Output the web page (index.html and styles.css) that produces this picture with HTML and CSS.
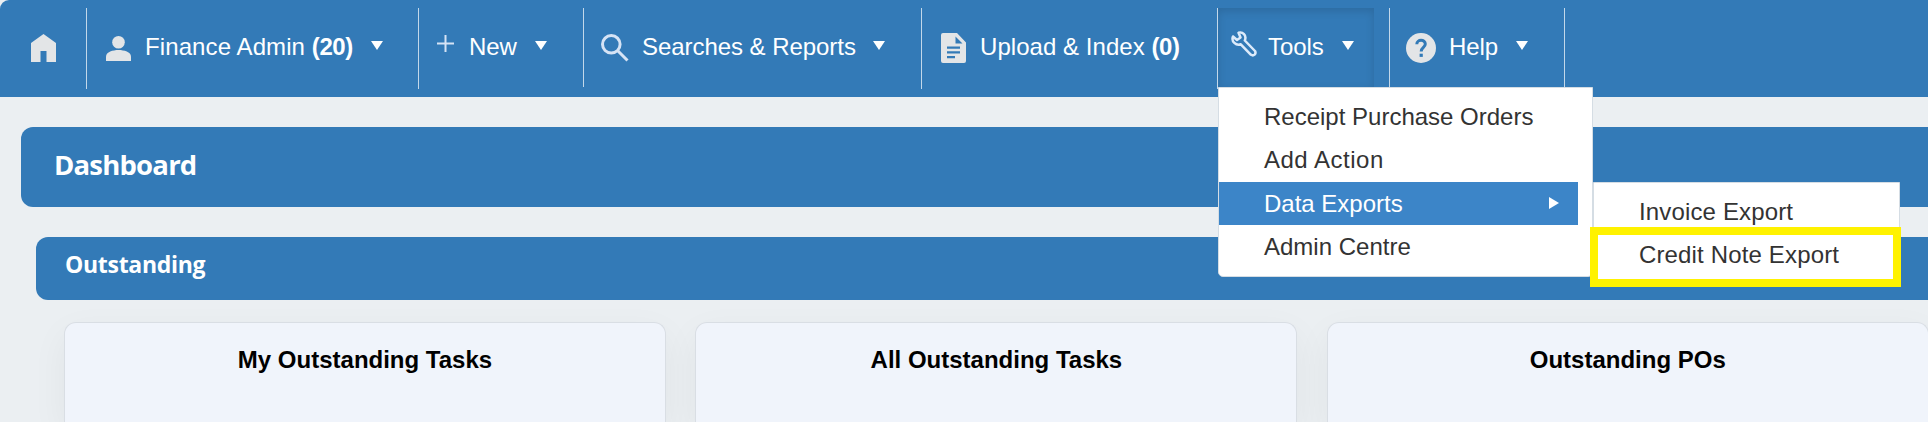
FILE: index.html
```html
<!DOCTYPE html>
<html lang="en">
<head>
    <meta charset="UTF-8">
    <meta name="viewport" content="width=device-width, initial-scale=1.0">
    <title>Dashboard</title>
    <link rel="stylesheet" href="styles.css">
</head>
<body>
    <nav class="navbar">
        <a class="nav-item home">
            <svg class="icon" width="25" height="28" viewBox="0 0 25 28"><path d="M12.5 0 L25 9 V28 H15.5 V17 H9.5 V28 H0 V9 Z"/></svg>
        </a>
        <a class="nav-item user">
            <svg class="icon" width="25" height="25" viewBox="0 0 25 25"><circle cx="12.5" cy="6.3" r="6.3"/><path d="M0 25 V20.5 C0 16 7 14 12.5 14 S25 16 25 20.5 V25 Z"/></svg>
            <span class="label">Finance Admin <b>(20)</b></span>
            <span class="caret"></span>
        </a>
        <a class="nav-item new">
            <svg class="icon line" width="17" height="17" viewBox="0 0 17 17"><path d="M8.5 0 V17 M0 8.5 H17"/></svg>
            <span class="label">New</span>
            <span class="caret"></span>
        </a>
        <a class="nav-item search">
            <svg class="icon line" width="28" height="28" viewBox="0 0 28 28"><circle cx="10.3" cy="10.3" r="8.8"/><path d="M16.5 16.5 L26.5 26.5"/></svg>
            <span class="label">Searches &amp; Reports</span>
            <span class="caret"></span>
        </a>
        <a class="nav-item upload">
            <svg class="icon" width="25" height="30" viewBox="0 0 25 30"><path fill-rule="evenodd" d="M2 0 H16 L25 9.5 V28 Q25 30 23 30 H2 Q0 30 0 28 V2 Q0 0 2 0 Z M14.5 3.5 V10.5 H21.5 Z M6 13.5 V15.7 H19 V13.5 Z M6 18.3 V20.5 H19 V18.3 Z M6 23 V25.2 H14 V23 Z"/></svg>
            <span class="label">Upload &amp; Index <b>(0)</b></span>
        </a>
        <div class="nav-item tools">
            <div class="tools-button">
                <svg class="icon wrench" width="26" height="26" viewBox="0 0 26 26"><path d="M2 5.5 L6 9 L9.5 6.5 L7.5 1.8 C11.5 0.5 16 4 13.8 9.5 L24 20 Q25.2 22 23.6 23.6 Q22 25 20 23.8 L9.8 13.3 C5 15 0 10.5 2 5.5 Z"/></svg>
                <span class="label">Tools</span>
                <span class="caret"></span>
            </div>
            <ul class="menu">
                <li>Receipt Purchase Orders</li>
                <li class="spaced">Add Action</li>
                <li class="active">Data Exports<span class="arrow"></span>
                    <ul class="menu submenu">
                        <li>Invoice Export</li>
                        <li>Credit Note Export<span class="highlight"></span></li>
                    </ul>
                </li>
                <li>Admin Centre</li>
            </ul>
        </div>
        <a class="nav-item help">
            <svg class="icon" width="30" height="30" viewBox="0 0 30 30"><circle cx="15" cy="15" r="15"/><path class="mark" d="M10.8 11.3 C10.8 6 19.3 6.2 19.3 11 C19.3 14.5 15.2 14.3 15.2 18.5"/><rect class="dot" x="13.6" y="20.7" width="3.2" height="3.2"/></svg>
            <span class="label">Help</span>
            <span class="caret"></span>
        </a>
    </nav>

    <main>
        <h1>Dashboard</h1>
        <h2>Outstanding</h2>
        <div class="cards">
            <div class="card"><h3>My Outstanding Tasks</h3></div>
            <div class="card"><h3>All Outstanding Tasks</h3></div>
            <div class="card"><h3>Outstanding POs</h3></div>
        </div>
    </main>
</body>
</html>
```
FILE: styles.css
```css
* {
    margin: 0;
    padding: 0;
    box-sizing: border-box;
}

body {
    font-family: "Liberation Sans", Arial, sans-serif;
    font-size: 24px;
    background: #ebeff2;
    height: 422px;
    overflow: hidden;
}

/* Navigation */
.navbar {
    display: flex;
    align-items: flex-start;
    height: 97px;
    padding-top: 8px;
    background: #337ab7;
    border-top-left-radius: 9px;
    color: #fff;
}

.nav-item {
    display: flex;
    align-items: flex-start;
    flex: none;
    height: 81px;
    border-left: 1px solid #c3d8ea;
}

.label {
    line-height: 28px;
    margin-top: 25px;
    letter-spacing: -0.05px;
    white-space: nowrap;
}

.label b {
    letter-spacing: -0.4px;
}

.caret {
    margin-top: 33px;
    border: 6px solid transparent;
    border-top: 9px solid #fff;
    border-bottom: 0;
}

.icon {
    flex: none;
    fill: #e3e5e7;
    margin-top: 26px;
}

.line {
    fill: none;
    stroke: #d6e3f5;
    stroke-width: 3;
}

.home {
    width: 86px;
    padding-left: 31px;
    border-left: 0;
}

.user {
    width: 332px;
    padding-left: 19px;
}

.user .icon {
    margin: 28px 14px 0 0;
}

.user .label {
    letter-spacing: 0.1px;
}

.user .caret {
    margin-left: 18px;
}

.search .caret {
    margin-left: 17px;
}

.new {
    width: 165px;
    padding-left: 18px;
}

.new .icon {
    margin: 27px 15px 0 0;
    stroke-width: 2;
}

.new .caret,
.help .caret {
    margin-left: 18px;
}

.search {
    width: 338px;
    height: 79px;
    padding-left: 17px;
}

.search .icon {
    margin-right: 13px;
}

.upload {
    width: 296px;
    padding-left: 19px;
}

.upload .icon {
    margin: 25px 14px 0 0;
}

.upload .label {
    letter-spacing: 0.05px;
}

.tools {
    position: relative;
    width: 172px;
}

.tools-button {
    display: flex;
    align-items: flex-start;
    width: 156px;
    height: 79px;
    padding-left: 13px;
    box-shadow: inset 0 3px 8px rgba(0, 0, 0, 0.13);
}

.wrench {
    fill: none;
    stroke: #dceafa;
    stroke-width: 2.5;
    stroke-linejoin: round;
    margin: 23px 11px 0 0;
}

.tools .caret {
    margin-left: 18px;
}

.help {
    width: 176px;
    height: 79px;
    padding-left: 16px;
    border-right: 1px solid #c3d8ea;
}

.help .icon {
    margin: 25px 13px 0 0;
}

.mark {
    fill: none;
    stroke: #337ab7;
    stroke-width: 3;
}

.dot {
    fill: #337ab7;
}

/* Dropdown menus */
.menu {
    position: absolute;
    z-index: 2;
    top: 79px;
    left: 0;
    width: 375px;
    height: 190px;
    padding: 8px 14px 8px 0;
    background: #fff;
    border: 1px solid #d5dde4;
    border-radius: 0 0 5px 5px;
    color: #333;
    list-style: none;
}

.menu li {
    position: relative;
    height: 43px;
    padding-left: 45px;
    line-height: 42px;
    white-space: nowrap;
}

.menu .spaced {
    letter-spacing: 0.5px;
}

.menu .active {
    background: #3c85c8;
    color: #fff;
}

.menu .active,
.menu .active + li {
    line-height: 43px;
}

.arrow {
    position: absolute;
    top: 15px;
    right: 19px;
    border: 6px solid transparent;
    border-left: 10px solid #fff;
    border-right: 0;
}

.submenu {
    top: 0;
    left: 374px;
    width: 307px;
    height: 104px;
    letter-spacing: 0.15px;
}

.highlight {
    position: absolute;
    top: -7px;
    left: -4px;
    width: 311px;
    height: 60px;
    border: 8px solid #fff200;
}

/* Page content */
main {
    height: 325px;
    padding: 30px 0 0 21px;
    overflow: hidden;
}

h1,
h2 {
    font-family: "Open Sans", "Noto Sans", sans-serif;
    background: #337ab7;
    color: #fff;
    border-radius: 12px 0 0 12px;
}

h1 {
    height: 80px;
    padding-left: 33px;
    font-size: 27.5px;
    line-height: 76px;
    letter-spacing: -0.8px;
}

h2 {
    height: 63px;
    margin: 30px 0 0 15px;
    padding-left: 29px;
    font-size: 23px;
    line-height: 55px;
    letter-spacing: -0.3px;
}

.cards {
    display: flex;
    gap: 29.4px;
    margin: 22px 0 0 43px;
}

.card {
    flex: none;
    width: 602px;
    height: 100px;
    padding-top: 23px;
    background: #f0f4fb;
    border: 1px solid #d9dee4;
    border-bottom: 0;
    border-radius: 12px 12px 0 0;
    box-shadow: 0 12px 36px rgba(0, 0, 0, 0.05);
    text-align: center;
}

h3 {
    font-size: 24px;
    line-height: 28px;
    color: #000;
}
```
